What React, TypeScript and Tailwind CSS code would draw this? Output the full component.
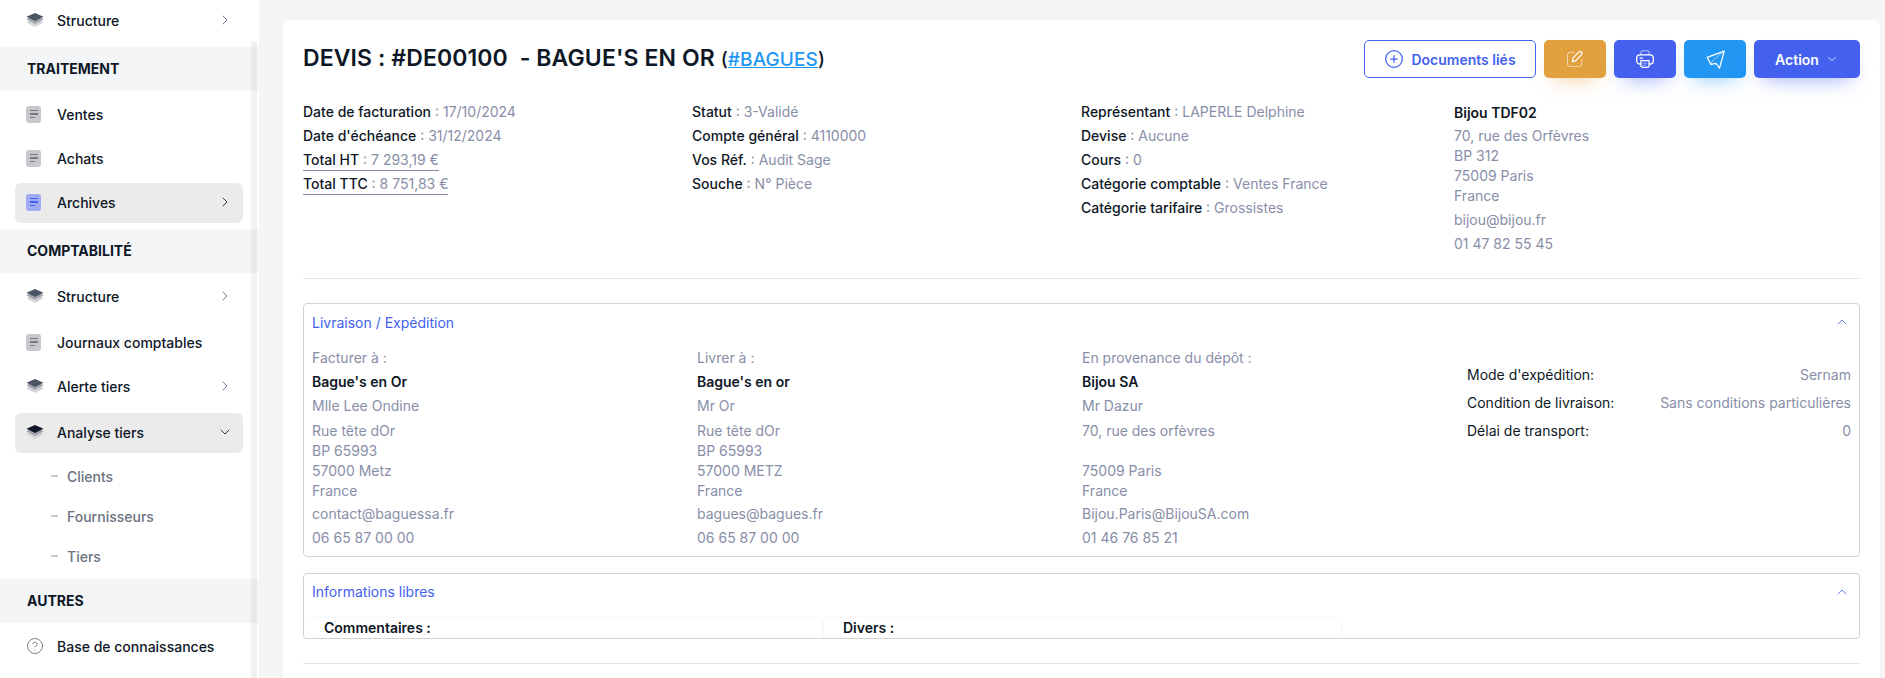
import { ChevronDown, ChevronRight, ChevronUp, CircleHelp, CirclePlus } from "lucide-react";

function LayersIcon({ color = "#4b5563" }: { color?: string }) {
  return (
    <svg width="18" height="14" viewBox="0 0 18 14" className="shrink-0">
      <path d="M0.5 9.6 L3 7.5 L15 7.5 L17.5 9.6 L9 14 Z" fill="#d5d6da" />
      <path d="M0.5 6.6 L3 4.5 L15 4.5 L17.5 6.6 L9 11 Z" fill="#a3a6ad" />
      <path d="M9 0 L17.5 3.8 L9 8 L0.5 3.8 Z" fill={color} />
    </svg>
  );
}

function DocIcon({ active = false }: { active?: boolean }) {
  const line = active ? "bg-[#4361ee]" : "bg-[#77797f]";
  return (
    <div className={`flex h-[17px] w-[15px] shrink-0 flex-col justify-center gap-[2px] rounded-[3px] pl-[4px] ${active ? "bg-[#a0abf6]" : "bg-[#c6c7cb]"}`}>
      <div className={`h-[1.5px] w-[8px] ${line}`} />
      <div className={`h-[1.5px] w-[8px] ${line}`} />
      <div className={`h-[1.5px] w-[5px] ${line}`} />
    </div>
  );
}

function EditIcon() {
  return (
    <svg width="20" height="20" viewBox="0 0 24 24" fill="none" stroke="white" strokeLinecap="round" strokeLinejoin="round">
      <path d="M11 4H7a4 4 0 0 0-4 4v9a4 4 0 0 0 4 4h9a4 4 0 0 0 4-4v-5" strokeOpacity="0.55" strokeWidth="1.25" />
      <path d="M9.5 11 L16.5 3.8 a2.2 2.2 0 0 1 3.3 3 L12.8 14.2 L9 15.2 Z" strokeWidth="1.5" />
    </svg>
  );
}

function PrinterIcon() {
  return (
    <svg width="20" height="20" viewBox="0 0 24 24" fill="none" stroke="white" strokeLinecap="round" strokeLinejoin="round">
      <path d="M7 7V4.5A2.5 2.5 0 0 1 9.5 2h5A2.5 2.5 0 0 1 17 4.5V7" strokeOpacity="0.6" strokeWidth="1.25" />
      <path d="M7 18H6a4 4 0 0 1-4-4v-3a4 4 0 0 1 4-4h12a4 4 0 0 1 4 4v3a4 4 0 0 1-4 4h-1" strokeWidth="1.6" />
      <path d="M6 11h3" strokeWidth="1.5" />
      <path d="M7 14h10v5.5a2.5 2.5 0 0 1-2.5 2.5h-5A2.5 2.5 0 0 1 7 19.5Z" strokeWidth="1.5" />
      <path d="M10 17h4M10 19.5h3" strokeOpacity="0.6" strokeWidth="1" />
    </svg>
  );
}

function PlaneIcon() {
  return (
    <svg width="21" height="21" viewBox="0 0 24 24" fill="none" stroke="white" strokeLinecap="round" strokeLinejoin="round">
      <path d="M22 2.5 L2.5 9.5 L6.5 17.5 L12.5 16.5 L16.5 22 Z" strokeWidth="1.4" />
      <path d="M22 2.5 L8 14 L6.5 17.5" strokeOpacity="0.55" strokeWidth="1.1" />
    </svg>
  );
}

function NavItem({ icon, label, chevron, active }: { icon: React.ReactNode; label: string; chevron?: "right" | "down"; active?: boolean }) {
  return (
    <div className={`ml-[15px] mr-[16px] flex items-center rounded-[6px] pb-[2px] pl-[11px] pr-[10px] ${active ? "h-[40px] bg-[#ebebeb]" : "h-[44px]"}`}>
      <div className="flex w-[31px] items-center">{icon}</div>
      <span className="flex-1 text-[14px] font-medium text-[#0e1726]">{label}</span>
      {chevron === "right" && <ChevronRight size={16} strokeWidth={1.25} className={active ? "text-[#0e1726]" : "text-[#506690]"} />}
      {chevron === "down" && <ChevronDown size={16} strokeWidth={1.25} className="text-[#0e1726]" />}
    </div>
  );
}

function Band({ label, className = "" }: { label: string; className?: string }) {
  return (
    <div className={`flex h-[44px] items-center bg-[#f4f5f7] pb-[2px] pl-[27px] text-[14px] font-bold text-[#0e1726] ${className}`}>{label}</div>
  );
}

function SubItem({ label }: { label: string }) {
  return (
    <div className="flex h-[40px] items-center pb-[2px] pl-[51px] text-[14px] font-medium text-[#6b7280]">
      <div className="mr-[9px] h-[1.5px] w-[7px] bg-[#c3c6cc]" />
      {label}
    </div>
  );
}

function Sidebar() {
  return (
    <aside className="relative h-[678px] w-[259px] shrink-0 overflow-hidden bg-white">
      <div className="-mt-[1px]">
        <NavItem icon={<LayersIcon />} label="Structure" chevron="right" />
      </div>
      <Band label="TRAITEMENT" className="mt-[4px]" />
      <div className="mt-[2px]">
        <NavItem icon={<DocIcon />} label="Ventes" />
        <NavItem icon={<DocIcon />} label="Achats" />
      </div>
      <div className="mt-[2px]">
        <NavItem icon={<DocIcon active />} label="Archives" chevron="right" active />
      </div>
      <Band label="COMPTABILITÉ" className="mt-[6px]" />
      <div className="mt-[2px]">
        <NavItem icon={<LayersIcon />} label="Structure" chevron="right" />
      </div>
      <div className="mt-[2px]">
        <NavItem icon={<DocIcon />} label="Journaux comptables" />
        <NavItem icon={<LayersIcon />} label="Alerte tiers" chevron="right" />
      </div>
      <div className="mt-[4px]">
        <NavItem icon={<LayersIcon color="#111827" />} label="Analyse tiers" chevron="down" active />
      </div>
      <div className="mt-[4px]">
        <SubItem label="Clients" />
        <SubItem label="Fournisseurs" />
        <SubItem label="Tiers" />
      </div>
      <Band label="AUTRES" className="mt-[2px]" />
      <div className="mt-[2px]">
        <NavItem icon={<CircleHelp size={18} strokeWidth={1.25} className="text-[#77797f]" />} label="Base de connaissances" />
      </div>
      <div className="absolute bottom-0 left-[251px] top-[41px] w-[6px] rounded-t-[3px] bg-black/5" />
    </aside>
  );
}

function Field({ label, value, underline }: { label: string; value: string; underline?: boolean }) {
  return (
    <div className="flex h-[24px] items-center">
      <span className={`leading-[20px] ${underline ? "border-b border-[#888ea8]" : ""}`}>
        <span className="font-medium text-[#0e1726]">{label}</span>
        <span className="text-[#888ea8]"> : {value}</span>
      </span>
    </div>
  );
}

function ToolButton({ color, children }: { color: string; children: React.ReactNode }) {
  return <button className={`flex h-[38px] w-[62px] items-center justify-center rounded-[5px] text-white ${color}`}>{children}</button>;
}

function AddressColumn({ title, name, contact, lines, mail, phone }: { title: string; name: string; contact: string; lines: string[]; mail: string; phone: string }) {
  return (
    <div className="w-[385px] text-[14px] text-[#888ea8]">
      <div className="flex h-[24px] items-center">{title}</div>
      <div className="flex h-[24px] items-center pt-[1px] font-semibold text-[#0e1726]">{name}</div>
      <div className="flex h-[24px] items-center">{contact}</div>
      <div className="mt-[4px]">
        {lines.map((l, i) => (
          <div key={i} className="h-[20px] leading-[20px]">{l}</div>
        ))}
      </div>
      <div className="flex h-[24px] items-center">{mail}</div>
      <div className="flex h-[24px] items-center">{phone}</div>
    </div>
  );
}

function ShipRow({ label, value }: { label: string; value: string }) {
  return (
    <div className="flex h-[28px] items-center justify-between">
      <span className="text-[#0e1726]">{label}</span>
      <span className="text-[#888ea8]">{value}</span>
    </div>
  );
}

export default function App() {
  return (
    <div className="flex h-[678px] overflow-hidden bg-[#f5f5f5] font-['Inter',sans-serif]">
      <Sidebar />
      <main className="flex-1 pl-[24px] pr-[5px] pt-[20px]">
        <div className="h-[700px] rounded-[6px] bg-white px-[20px] pt-[20px]">
          {/* Header */}
          <div className="flex items-center justify-between">
            <h1 className="-mt-[2px] text-[23px] font-semibold tracking-[0.1px] text-[#0e1726]">
              DEVIS : #DE00100 &nbsp;- BAGUE'S EN OR{" "}
              <span className="text-[19px] font-medium">
                (<span className="text-[#2196f3] underline">#BAGUES</span>)
              </span>
            </h1>
            <div className="flex gap-[8px]">
              <button className="flex h-[38px] w-[172px] items-center justify-center gap-[7px] rounded-[5px] border border-[#4361ee] bg-white text-[14px] font-semibold text-[#4361ee]">
                <CirclePlus size={20} strokeWidth={1.5} />
                Documents liés
              </button>
              <ToolButton color="bg-[#e2a03f] shadow-[0_10px_20px_-10px_rgba(226,160,63,0.59)]">
                <EditIcon />
              </ToolButton>
              <ToolButton color="bg-[#4361ee] shadow-[0_10px_20px_-10px_rgba(67,97,238,0.59)]">
                <PrinterIcon />
              </ToolButton>
              <ToolButton color="bg-[#2196f3] shadow-[0_10px_20px_-10px_rgba(33,150,243,0.59)]">
                <PlaneIcon />
              </ToolButton>
              <button className="flex h-[38px] w-[106px] items-center justify-center gap-[6px] rounded-[5px] bg-[#4361ee] text-[14px] font-semibold text-white shadow-[0_10px_20px_-10px_rgba(67,97,238,0.59)]">
                Action
                <ChevronDown size={14} strokeWidth={1.25} />
              </button>
            </div>
          </div>

          {/* Info columns */}
          <div className="mt-[22px] flex border-b border-[#e0e6ed] pb-[23px] text-[14px]">
            <div className="w-[389px]">
              <Field label="Date de facturation" value="17/10/2024" />
              <Field label="Date d'échéance" value="31/12/2024" />
              <Field label="Total HT" value="7 293,19 €" underline />
              <Field label="Total TTC" value="8 751,83 €" underline />
            </div>
            <div className="w-[389px]">
              <Field label="Statut" value="3-Validé" />
              <Field label="Compte général" value="4110000" />
              <Field label="Vos Réf." value="Audit Sage" />
              <Field label="Souche" value="N° Pièce" />
            </div>
            <div className="w-[373px]">
              <Field label="Représentant" value="LAPERLE Delphine" />
              <Field label="Devise" value="Aucune" />
              <Field label="Cours" value="0" />
              <Field label="Catégorie comptable" value="Ventes France" />
              <Field label="Catégorie tarifaire" value="Grossistes" />
            </div>
            <div className="text-[#888ea8]">
              <div className="flex h-[24px] items-center font-semibold text-[#0e1726]">Bijou TDF02</div>
              <div className="mt-[2px] leading-[20px]">
                <div>70, rue des Orfèvres</div>
                <div>BP 312</div>
                <div>75009 Paris</div>
                <div>France</div>
              </div>
              <div className="mt-[1px] flex h-[24px] items-center">bijou@bijou.fr</div>
              <div className="flex h-[24px] items-center">01 47 82 55 45</div>
            </div>
          </div>

          {/* Livraison */}
          <section className="mt-[24px] h-[254px] rounded-[4px] border border-[#d3d3d3] px-[8px]">
            <div className="flex h-[41px] items-center justify-between pb-[5px] pr-[1px] text-[14px] text-[#4361ee]">
              Livraison / Expédition
              <ChevronUp size={16} strokeWidth={1.25} />
            </div>
            <div className="flex">
              <AddressColumn
                title="Facturer à :"
                name="Bague's en Or"
                contact="Mlle Lee Ondine"
                lines={["Rue tête dOr", "BP 65993", "57000 Metz", "France"]}
                mail="contact@baguessa.fr"
                phone="06 65 87 00 00"
              />
              <AddressColumn
                title="Livrer à :"
                name="Bague's en or"
                contact="Mr Or"
                lines={["Rue tête dOr", "BP 65993", "57000 METZ", "France"]}
                mail="bagues@bagues.fr"
                phone="06 65 87 00 00"
              />
              <AddressColumn
                title="En provenance du dépôt :"
                name="Bijou SA"
                contact="Mr Dazur"
                lines={["70, rue des orfèvres", "", "75009 Paris", "France"]}
                mail="Bijou.Paris@BijouSA.com"
                phone="01 46 76 85 21"
              />
              <div className="flex-1 pt-[15px] text-[14px]">
                <ShipRow label="Mode d'expédition:" value="Sernam" />
                <ShipRow label="Condition de livraison:" value="Sans conditions particulières" />
                <ShipRow label="Délai de transport:" value="0" />
              </div>
            </div>
          </section>

          {/* Informations libres */}
          <section className="mt-[16px] h-[66px] overflow-hidden rounded-[4px] border border-[#d3d3d3]">
            <div className="flex h-[44px] items-center justify-between px-[8px] pb-[9px] pr-[9px] text-[14px] text-[#4361ee]">
              Informations libres
              <ChevronUp size={16} strokeWidth={1.25} />
            </div>
            <div className="flex text-[14px] font-semibold text-[#0e1726]">
              <div className="flex h-[22px] w-[518px] items-center rounded-t-[6px] pb-[4px] pl-[20px] shadow-[0_0_3px_rgba(0,0,0,0.08)]">Commentaires :</div>
              <div className="ml-[1px] flex h-[22px] w-[518px] items-center rounded-t-[6px] pb-[4px] pl-[20px] shadow-[0_0_3px_rgba(0,0,0,0.08)]">Divers :</div>
            </div>
          </section>
          <div className="mt-[24px] border-b border-[#e0e6ed]" />
        </div>
      </main>
    </div>
  );
}
